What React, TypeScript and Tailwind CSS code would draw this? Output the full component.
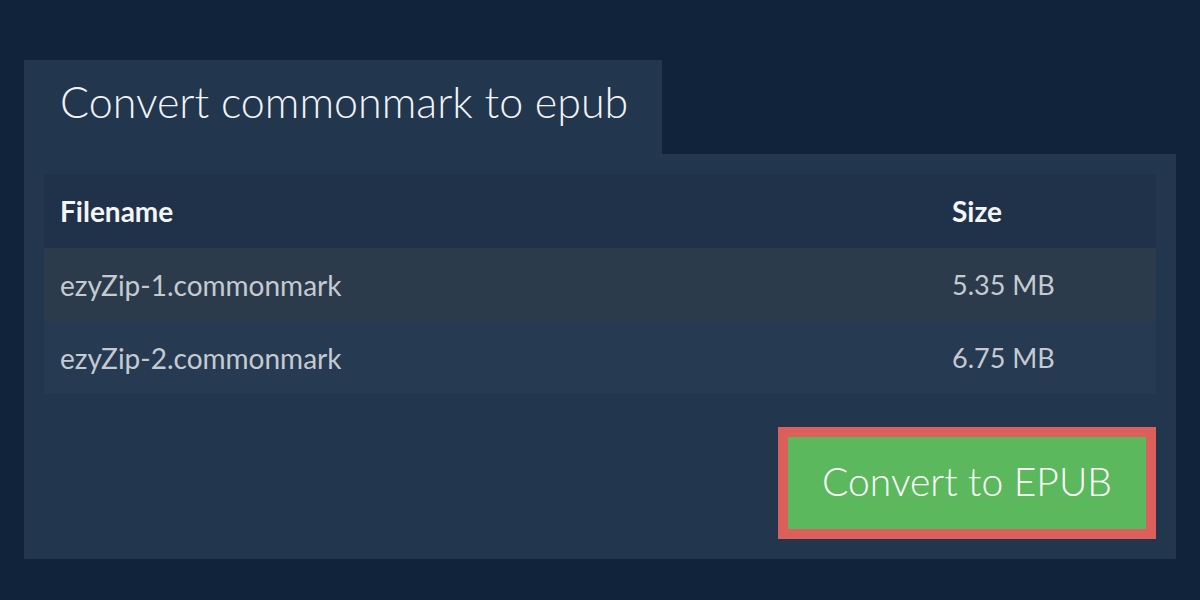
const files = [
  { name: "ezyZip-1.commonmark", size: "5.35 MB" },
  { name: "ezyZip-2.commonmark", size: "6.75 MB" },
];

export default function App() {
  return (
    <div
      className="w-[1200px] h-[600px] bg-[#10233a] px-6 pt-[60px] overflow-hidden"
      style={{ fontFamily: "Lato, 'Open Sans', sans-serif" }}
    >
      <div className="flex">
        <div className="w-[638px] h-[94px] bg-[#22364e] pl-9 flex items-center">
          <h1 className="text-[43px] font-light text-[#f1f3f5] leading-none pb-3">
            Convert commonmark to epub
          </h1>
        </div>
      </div>
      <div className="bg-[#22364e] px-5 pt-5 pb-5">
        <table className="w-full border-collapse text-left">
          <thead>
            <tr className="bg-[#1f3249] h-[74px]">
              <th className="pl-4 text-[28px] font-bold text-[#f3f5f7]">Filename</th>
              <th className="w-[204px] pl-0 text-[28px] font-bold text-[#f3f5f7]">Size</th>
            </tr>
          </thead>
          <tbody>
            {files.map((f, i) => (
              <tr key={f.name} className={i === 0 ? "bg-[#2c3b4c] h-[74px]" : "bg-[#263a52] h-[72px]"}>
                <td className="pl-4 text-[28px] text-[#c5cad1]">{f.name}</td>
                <td className="text-[27px] text-[#c5cad1]">{f.size}</td>
              </tr>
            ))}
          </tbody>
        </table>
        <div className="flex justify-end pt-[33px]">
          <button className="w-[378px] h-[112px] border-[10px] border-[#dc5f5c] bg-[#5cb85c] text-white text-[39px] font-light pb-1">
            Convert to EPUB
          </button>
        </div>
      </div>
    </div>
  );
}
